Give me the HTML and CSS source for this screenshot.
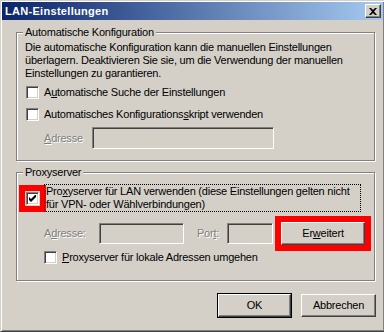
FILE: index.html
```html
<!DOCTYPE html>
<html lang="de">
<head>
  <meta charset="UTF-8" />
  <meta name="viewport" content="width=device-width, initial-scale=1.0"/>
  <title>LAN-Einstellungen</title>
  <link rel="stylesheet" href="styles.css">
</head>
<body>

  <div class="window">
    <div class="titlebar">
      <span class="title">LAN-Einstellungen</span>
      <span class="close">
        <svg width="8" height="7" viewBox="0 0 8 7">
          <path d="M0 0h2l2 2 2-2h2L5 3.5 8 7H6L4 5 2 7H0l3-3.5z" fill="#000"/>
        </svg>
      </span>
    </div>

    <fieldset class="group group-auto">
      <legend>Automatische Konfiguration</legend>
      <p class="desc">Die automatische Konfiguration kann die manuellen Einstellungen<br>überlagern. Deaktivieren Sie sie, um die Verwendung der manuellen<br>Einstellungen zu garantieren.</p>

      <div class="check-row first">
        <span class="check"></span>
        <span>A<u>u</u>tomatische Suche der Einstellungen</span>
      </div>
      <div class="check-row second">
        <span class="check"></span>
        <span>Automatisches Konfigurations<u>s</u>kript verwenden</span>
      </div>
      <div class="field-row auto-address">
        <span class="label disabled label-auto"><u>A</u>dresse</span>
        <span class="input input-auto"></span>
      </div>
    </fieldset>

    <fieldset class="group group-proxy">
      <legend>Proxyserver</legend>

      <div class="check-row proxy-row">
        <span class="check checked marked">
          <svg width="7" height="7" viewBox="0 0 7 7">
            <path d="M0 2l2 2 5-5v3L2 7 0 5z" fill="#000"/>
          </svg>
        </span>
        <span class="focus">Pro<u>x</u>yserver für LAN verwenden (diese Einstellungen gelten nicht<br>für VPN- oder Wählverbindungen)</span>
      </div>

      <div class="field-row proxy-address">
        <span class="label disabled label-proxy">A<u>d</u>resse:</span>
        <span class="input input-proxy"></span>
        <span class="label disabled label-port">Por<u>t</u>:</span>
        <span class="input input-port"></span>
        <button class="btn btn-advanced marked">Er<u>w</u>eitert</button>
      </div>

      <div class="check-row bypass-row">
        <span class="check"></span>
        <span><u>P</u>roxyserver für lokale Adressen umgehen</span>
      </div>
    </fieldset>

    <div class="actions">
      <button class="btn btn-default">OK</button>
      <button class="btn">Abbrechen</button>
    </div>
  </div>

</body>
</html>
```

FILE: styles.css
```css
body {
  margin: 0;
  font-family: "Liberation Sans", Arial, sans-serif;
  font-size: 11px;
  line-height: 13px;
  letter-spacing: -0.22px;
  color: #000;
  background: #d4d0c8;
  overflow: hidden;
}
u {
  text-decoration-thickness: 1px;
  text-underline-offset: 1px;
}
.window {
  box-sizing: border-box;
  width: 385px;
  height: 332px;
  padding: 1px;
  background: #d4d0c8;
  border: 1px solid;
  border-color: #d4d0c8 #404040 #404040 #d4d0c8;
  box-shadow: inset 1px 1px #fff, inset -1px -1px #808080;
}
.titlebar {
  display: flex;
  align-items: center;
  justify-content: space-between;
  height: 18px;
  padding: 0 2px 0 3px;
  background: linear-gradient(to right, #0a246a, #a6caf0);
}
.title {
  color: #fff;
  font-weight: bold;
  letter-spacing: 0.3px;
}
.close {
  box-sizing: border-box;
  display: flex;
  align-items: center;
  justify-content: center;
  width: 16px;
  height: 14px;
  background: #d4d0c8;
  border: 1px solid;
  border-color: #fff #404040 #404040 #fff;
  box-shadow: inset -1px -1px #808080;
}

/* group boxes */
.group {
  margin: 6px 8px 0 14px;
  padding: 0;
  min-inline-size: 0;
  border: 1px solid #808080;
  box-shadow: inset 1px 1px #fff, 1px 1px #fff;
}
.group legend {
  margin-left: 6px;
  padding: 0 2px;
  line-height: 13px;
  background: #d4d0c8;
}
.group-auto {
  padding: 2px 0 11px;
}
.group-proxy {
  margin-top: 5px;
  padding: 5px 0 16px;
}
.desc {
  margin: 0;
  padding-left: 8px;
  white-space: nowrap;
}

.check-row {
  display: flex;
  align-items: center;
  gap: 5px;
  padding-left: 9px;
  white-space: nowrap;
}
.check-row.first { margin-top: 6px; }
.check-row.second { margin-top: 9px; }
.bypass-row {
  margin-top: 6px;
  padding-left: 27px;
}
.check {
  box-sizing: border-box;
  flex: none;
  display: flex;
  align-items: center;
  justify-content: center;
  width: 13px;
  height: 13px;
  background: #fff;
  border: 1px solid;
  border-color: #808080 #fff #fff #808080;
  box-shadow: inset 1px 1px #404040, inset -1px -1px #d4d0c8;
}
.focus {
  box-sizing: border-box;
  width: 317px;
  padding: 0 1px;
  border: 1px dotted #000;
}

.field-row {
  display: flex;
  align-items: center;
  padding-left: 27px;
}
.auto-address { margin-top: 6px; }
.proxy-address { margin-top: 10px; }
.label {
  flex: none;
}
.disabled {
  color: #808080;
  text-shadow: 1px 1px #fff;
}
.label-auto { width: 48px; }
.label-proxy { width: 55px; }
.label-port {
  width: 30px;
  margin-left: 13px;
}
.input {
  box-sizing: border-box;
  flex: none;
  height: 21px;
  background: #d4d0c8;
  border: 1px solid;
  border-color: #808080 #fff #fff #808080;
  box-shadow: inset 1px 1px #404040, inset -1px -1px #d4d0c8;
}
.input-auto {
  width: 182px;
  height: 22px;
}
.input-proxy { width: 85px; }
.input-port { width: 46px; }

.btn {
  box-sizing: border-box;
  width: 75px;
  height: 23px;
  padding: 0;
  font: inherit;
  letter-spacing: inherit;
  color: #000;
  background: #d4d0c8;
  border: 1px solid;
  border-color: #fff #404040 #404040 #fff;
  box-shadow: inset -1px -1px #808080;
}
.btn-advanced {
  width: 84px;
  margin-left: 8px;
}
.btn-default {
  width: 73px;
  outline: 1px solid #000;
}
.actions {
  display: flex;
  justify-content: flex-end;
  gap: 10px;
  margin-top: 13px;
  padding-right: 7px;
}

/* red highlight frames */
.marked {
  outline: 6px solid #f00;
}
.check.marked {
  outline-offset: 1px;
}
```
